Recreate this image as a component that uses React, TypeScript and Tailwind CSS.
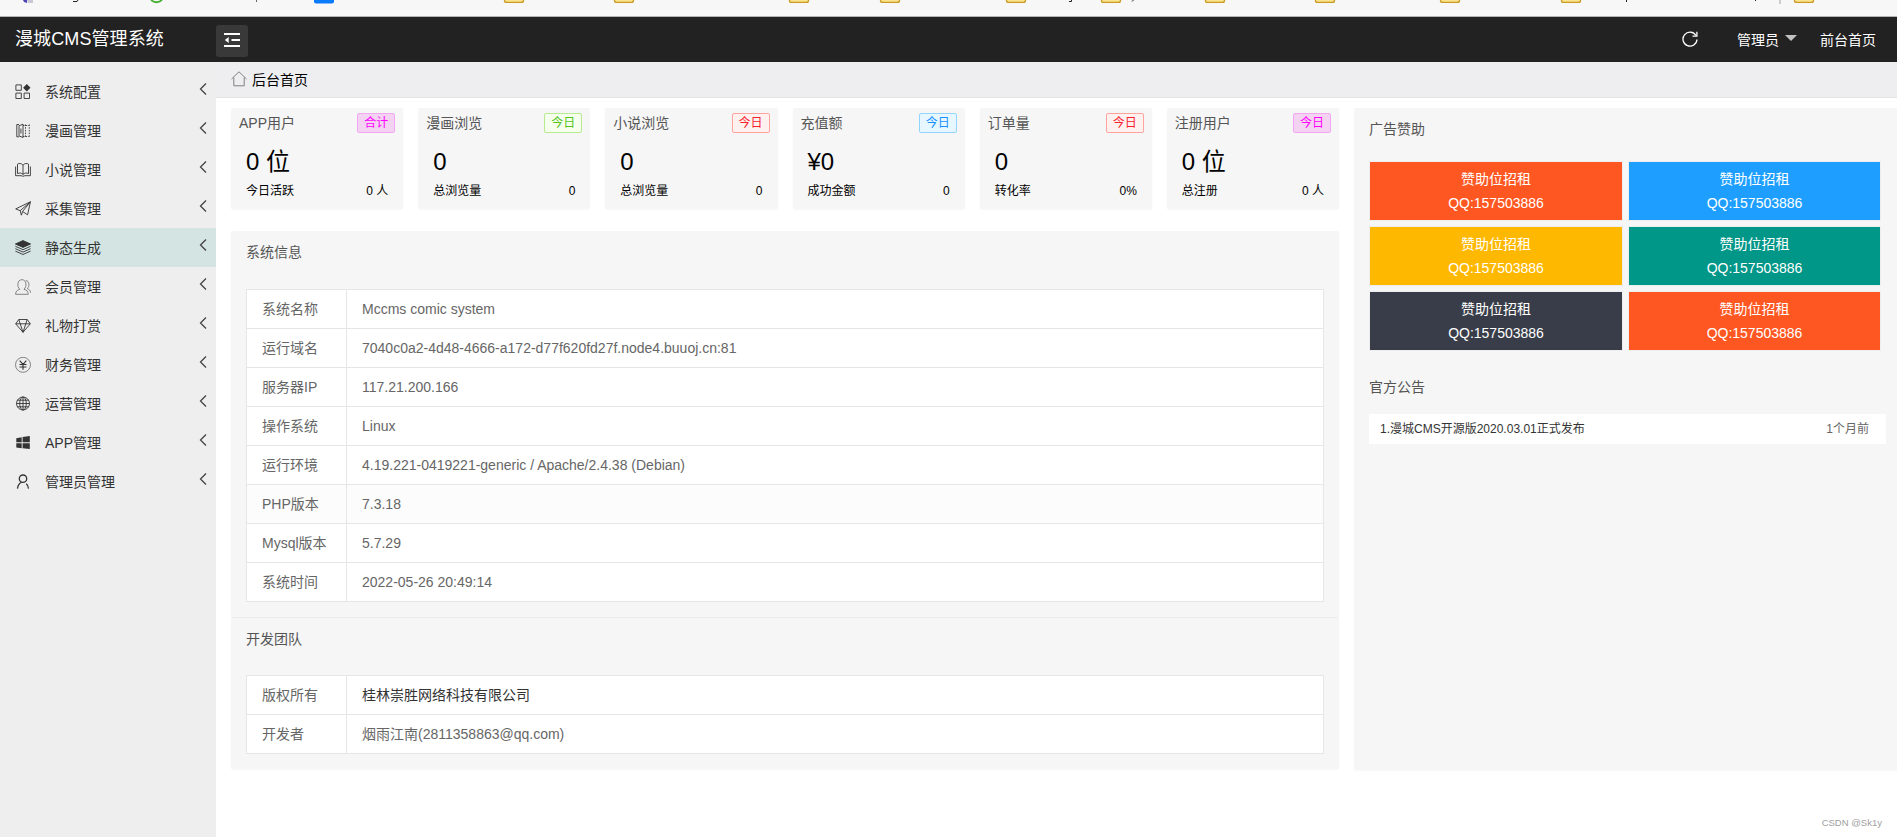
import type { ReactNode } from "react";
import { clsx } from "clsx";

type MenuItem = { label: string; icon: ReactNode; active?: boolean };

const menu: MenuItem[] = [
  {
    label: "系统配置",
    icon: (
      <>
        <path d="M.9.9h5.4v5.4H.9zM.9 9.1h5.4v5.4H.9zM9.1 9.1h5.4v5.4H9.1z" />
        <path d="M11.8.1 15.5 3.8 11.8 7.5 8.1 3.8z" fill="currentColor" stroke="none" />
      </>
    ),
  },
  {
    label: "漫画管理",
    icon: (
      <>
        <path d="M4 1.500H1.800v12.300H4M4 2.800l4-1.600v13.300l-4-1.600z" />
        <path d="M5.900 5.500v5" />
        <path d="M10.500 1.500v13M14.300 1.500v13" strokeDasharray="1.500 1.200" />
        <path d="M8 2.500h6M8 13.500h6" strokeDasharray="1.500 1.200" />
      </>
    ),
  },
  {
    label: "小说管理",
    icon: (
      <path d="M8 3.200C6.400 1.200 3.800 1 2.500 2.200v9.400C4.300 10.600 6.600 10.900 8 12.400c1.400-1.500 3.700-1.800 5.500-.8V2.200C12.200 1 9.600 1.200 8 3.200zM8 3.200v9.200M.6 4.500v9.200h5.600l1.800.6 1.800-.6h5.600V4.500" />
    ),
  },
  {
    label: "采集管理",
    icon: <path d="M5.200 9.700.7 7.900 15.400.8 12.600 13.800 7.600 10.500 15.400.8 5.200 9.700 6.400 14.200 7.600 10.500" />,
  },
  {
    label: "静态生成",
    active: true,
    icon: (
      <>
        <path d="M8 .6 15.600 4 8 7.400.4 4z" fill="currentColor" />
        <path d="M.4 6.300 8 9.700l7.600-3.400M.4 8.700 8 12.100l7.600-3.400M.4 11.100 8 14.500l7.600-3.400" />
      </>
    ),
  },
  {
    label: "会员管理",
    icon: (
      <g stroke="#777">
        <path d="M.6 15.300c0-3 1.600-4.200 4.200-5C3 8.500 2.700 6.800 2.900 4.800 3.100 2.200 4.700.7 6.900.7s3.800 1.500 4 4.100c.2 2-.1 3.700-1.900 5.500 2.600.8 4.200 2 4.200 5z" />
        <path d="M10.800 1.600c1.800.1 3 1.300 3.100 3.600.1 1.700-.2 3-1.600 4.500 2 .7 3.200 1.700 3.200 4" />
      </g>
    ),
  },
  {
    label: "礼物打赏",
    icon: <path d="M3.800 1.500h8.400l3.100 4.300L8 14.300.7 5.800zM.7 5.800h14.600M3.800 1.500l1.400 4.300L8 14.300l2.800-8.500 1.400-4.300" />,
  },
  {
    label: "财务管理",
    icon: (
      <>
        <circle cx="8" cy="7.800" r="7.500" stroke="#777" />
        <path d="M4.700 3.600 8 7.300l3.300-3.700M8 7.300v5.400M4.500 7.500h7M4.500 10h7" strokeWidth="1.100" />
      </>
    ),
  },
  {
    label: "运营管理",
    icon: (
      <>
        <circle cx="8" cy="7.500" r="6.500" />
        <ellipse cx="8" cy="7.500" rx="3.300" ry="6.500" />
        <path d="M8 1v13M1.500 7.500h13M2.500 4.200h11M2.500 10.800h11" />
      </>
    ),
  },
  {
    label: "APP管理",
    icon: (
      <path
        d="M1.300 3.200 6.700 2.300v5H1.300zM7.600 2.100 14.800 1v6.300H7.600zM1.300 8.200h5.400v5l-5.400-.8zM7.600 8.200h7.200v5.800l-7.200-.8z"
        fill="currentColor"
        stroke="none"
      />
    ),
  },
  {
    label: "管理员管理",
    icon: (
      <>
        <circle cx="8" cy="4.700" r="3.700" strokeWidth="1.300" />
        <path d="M2.500 14.600c.2-3 1.500-5 3.900-6.400M13.500 14.600c-.1-2-.8-3.700-2.300-4.800" strokeWidth="1.300" />
      </>
    ),
  },
];

const stats = [
  { title: "APP用户", tag: "合计", tone: "pink", value: "0 位", label: "今日活跃", total: "0 人" },
  { title: "漫画浏览", tag: "今日", tone: "green", value: "0", label: "总浏览量", total: "0" },
  { title: "小说浏览", tag: "今日", tone: "red", value: "0", label: "总浏览量", total: "0" },
  { title: "充值额", tag: "今日", tone: "blue", value: "¥0", label: "成功金额", total: "0" },
  { title: "订单量", tag: "今日", tone: "red", value: "0", label: "转化率", total: "0%" },
  { title: "注册用户", tag: "今日", tone: "pink", value: "0 位", label: "总注册", total: "0 人" },
];

const tones: Record<string, string> = {
  pink: "border-[#f3a6f1] bg-[#f3d3f1] text-[#ff00ff]",
  green: "border-[#b7eb8f] bg-[#f6ffed] text-[#52c41a]",
  red: "border-[#ffa39e] bg-[#fff1f0] text-[#f5222d]",
  blue: "border-[#91d5ff] bg-[#e6f7ff] text-[#1890ff]",
};

const systemInfo = [
  { name: "系统名称", value: "Mccms comic system" },
  { name: "运行域名", value: "7040c0a2-4d48-4666-a172-d77f620fd27f.node4.buuoj.cn:81" },
  { name: "服务器IP", value: "117.21.200.166" },
  { name: "操作系统", value: "Linux" },
  { name: "运行环境", value: "4.19.221-0419221-generic / Apache/2.4.38 (Debian)" },
  { name: "PHP版本", value: "7.3.18", className: "bg-[#fcfcfc]" },
  { name: "Mysql版本", value: "5.7.29" },
  { name: "系统时间", value: "2022-05-26 20:49:14" },
];

const team = [
  { name: "版权所有", value: "桂林崇胜网络科技有限公司", valueClassName: "text-[#333]" },
  { name: "开发者", value: "烟雨江南(2811358863@qq.com)" },
];

const ads = ["bg-[#ff5722]", "bg-[#1e9fff]", "bg-[#ffb800]", "bg-[#009688]", "bg-[#393d49]", "bg-[#ff5722]"];

const folders = [504, 614, 789, 880, 1006, 1101, 1205, 1315, 1440, 1561, 1794];

function BookmarkStrip() {
  return (
    <div className="h-[17px] shrink-0 border-b border-[#b4b4b4] bg-[#f7f7f7]">
      <svg width="1897" height="5" className="block">
        <path d="M23 0h4v3l-3-1z" fill="#4b45b5" />
        <path d="M27 0h6v3h-5z" fill="#c9c9d6" />
        <path d="M73 1.500h4l1-1.500" fill="none" stroke="#222" />
        <path d="M151 0q5.500 4.500 11 0" fill="none" stroke="#45b030" strokeWidth="1.800" />
        <path d="M256.500 0v2" stroke="#666" />
        <rect x="314" y="-6" width="20" height="9.500" rx="2" fill="#0a7bff" />
        {folders.map((x) => (
          <rect
            key={x}
            x={x + 0.5}
            y="-6"
            width="19"
            height="8.400"
            rx="2"
            fill="#fbe38c"
            stroke="#c99a24"
            strokeWidth="1.300"
          />
        ))}
        <path d="M1069 1.500h2.500V0M1132 1.500l1.500-1.500M1626.500 0v2M1755.500 0v1" fill="none" stroke="#222" />
        <path d="M1780 0v4" stroke="#ccc" strokeWidth="2" />
      </svg>
    </div>
  );
}

function Header() {
  return (
    <header className="flex h-[45px] shrink-0 items-center bg-[#222] text-sm text-white">
      <div className="w-[216px] pb-0.5 pl-[15px] text-lg leading-none tracking-[0.1px]">漫城CMS管理系统</div>
      <button className="mt-0.5 flex size-8 items-center justify-center rounded-[3px] bg-[#393939]">
        <svg width="16" height="16" viewBox="0 0 16 16" fill="#fff" className="mb-0.5">
          <path d="M0 1h16v2H0zM7.500 7H16v2H7.500zM0 13h16v2H0zM4.700 4.900v6.200L.8 8z" />
        </svg>
      </button>
      <div className="ml-auto flex items-center pr-[21px]">
        <svg width="16" height="16" viewBox="0 0 16 16" fill="none" stroke="#fff" strokeWidth="1.300" className="mb-0.5">
          <path d="M14 4.500A7 7 0 1 0 15 8.500" />
          <path d="M14.900.8v4.400h-4.400" />
        </svg>
        <span className="ml-[39px]">管理员</span>
        <svg width="12" height="6" className="mb-1 ml-1.5" fill="#c2c2c2">
          <path d="M0 0h12L6 6z" />
        </svg>
        <span className="ml-[23px]">前台首页</span>
      </div>
    </header>
  );
}

function Sidebar() {
  return (
    <aside className="w-[216px] shrink-0 bg-[#eee] pt-2.5">
      {menu.map((item) => (
        <a
          key={item.label}
          className={clsx(
            "flex h-[39px] items-center pr-[9px] pl-[15px] text-sm text-[#333]",
            item.active && "bg-[#d4e4e2]",
          )}
        >
          <svg width="16" height="16" viewBox="0 0 16 16" fill="none" stroke="currentColor" strokeWidth="0.900">
            {item.icon}
          </svg>
          <span className="ml-3.5">{item.label}</span>
          <svg width="8" height="12" className="mb-1.5 ml-auto" fill="none" stroke="#444" strokeWidth="1.300">
            <path d="M7 .5 1.500 6 7 11.500" />
          </svg>
        </a>
      ))}
    </aside>
  );
}

function StatCard({ title, tag, tone, value, label, total }: (typeof stats)[number]) {
  return (
    <div className="h-[101px] rounded-xs bg-[#f6f6f6] shadow-[0_1px_2px_rgba(0,0,0,0.03)]">
      <div className="flex items-center justify-between px-2 pt-[5px]">
        <span className="text-sm leading-5 text-[#555]">{title}</span>
        <span className={clsx("flex h-5 w-[38px] items-center justify-center rounded-xs border text-xs", tones[tone])}>
          {tag}
        </span>
      </div>
      <div className="mt-[11px] px-[15px] text-2xl leading-9 text-black">{value}</div>
      <div className="mt-px flex justify-between px-[15px] text-xs leading-5 text-black">
        <span>{label}</span>
        <span>{total}</span>
      </div>
    </div>
  );
}

type Row = { name: string; value: string; className?: string; valueClassName?: string };

function InfoSection({ title, rows, divided }: { title: string; rows: Row[]; divided?: boolean }) {
  return (
    <section
      className={clsx(
        "rounded-xs bg-[#f6f6f6] px-[15px] pb-[15px] shadow-[0_1px_2px_rgba(0,0,0,0.03)]",
        divided && "border-t border-[#ececec]",
      )}
    >
      <h2 className={clsx("text-sm leading-[42px] text-[#555]", divided ? "h-[57px]" : "h-[58px]")}>{title}</h2>
      <div className="border border-b-0 border-[#e6e6e6] text-sm text-[#666]">
        {rows.map((row) => (
          <div
            key={row.name}
            className={clsx("flex h-[39px] items-center border-b border-[#e6e6e6]", row.className ?? "bg-white")}
          >
            <div className="flex h-full w-[100px] items-center border-r border-[#e6e6e6] pl-[15px]">{row.name}</div>
            <div className={clsx("pl-[15px]", row.valueClassName)}>{row.value}</div>
          </div>
        ))}
      </div>
    </section>
  );
}

function SidePanel() {
  return (
    <section className="h-[662px] flex-1 rounded-l-xs bg-[#f6f6f6] pl-[15px] shadow-[0_1px_2px_rgba(0,0,0,0.03)]">
      <h2 className="h-[53px] text-sm leading-[42px] text-[#555]">广告赞助</h2>
      <div className="grid w-[513px] grid-cols-[254px_253px] gap-x-[5px] gap-y-[5px]">
        {ads.map((color, i) => (
          <div
            key={i}
            className={clsx("border border-[#eee] bg-clip-padding py-[5px] text-center text-sm leading-6 text-white", color)}
          >
            <div>赞助位招租</div>
            <div>QQ:157503886</div>
          </div>
        ))}
      </div>
      <h2 className="mt-[15px] h-[48px] text-sm leading-[42px] text-[#555]">官方公告</h2>
      <div className="flex h-[30px] w-[517px] items-center justify-between bg-white pr-[17px] pl-[11px] text-xs text-[#333]">
        <span>1.漫城CMS开源版2020.03.01正式发布</span>
        <span className="text-[#666]">1个月前</span>
      </div>
    </section>
  );
}

export default function App() {
  return (
    <div className="flex h-[837px] w-full flex-col overflow-hidden bg-white font-['Liberation_Sans','Noto_Sans_CJK_SC',sans-serif]">
      <BookmarkStrip />
      <Header />
      <div className="flex min-h-0 flex-1">
        <Sidebar />
        <main className="flex min-w-0 flex-1 flex-col">
          <div className="flex h-9 items-center border-b border-[#e4e4e4] bg-[#eeeef0] pl-[15px] text-sm text-black">
            <svg width="16" height="16" viewBox="0 0 16 16" fill="none" stroke="#808080" className="mb-0.5">
              <path d="M.5 8 8 .8 15.500 8M2.800 6.500v8.300h10.400V6.500" />
            </svg>
            <span className="ml-[5px]">后台首页</span>
          </div>
          <div className="flex pt-2.5 pl-[15px]">
            <div className="w-[1108px] shrink-0">
              <div className="grid grid-cols-6 gap-[15px]">
                {stats.map((stat) => (
                  <StatCard key={stat.title} {...stat} />
                ))}
              </div>
              <div className="mt-[22px]">
                <InfoSection title="系统信息" rows={systemInfo} />
                <InfoSection title="开发团队" rows={team} divided />
              </div>
            </div>
            <div className="ml-[15px] flex flex-1">
              <SidePanel />
            </div>
          </div>
          <div className="mt-auto pr-[15px] pb-[6px] text-right font-['Liberation_Sans',sans-serif] text-[9.500px] leading-4 text-[#a0a0a0]">
            CSDN @Sk1y
          </div>
        </main>
      </div>
    </div>
  );
}
